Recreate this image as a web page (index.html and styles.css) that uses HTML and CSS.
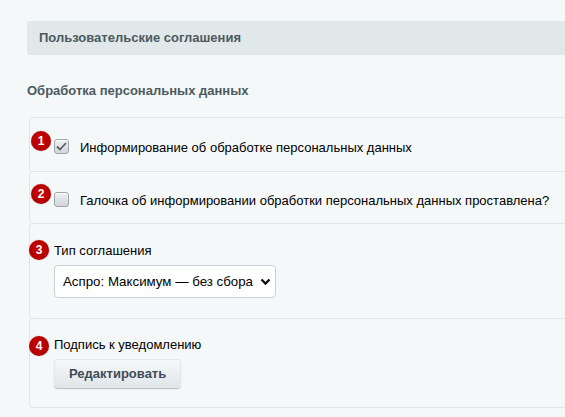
FILE: index.html
```html
<!DOCTYPE html>
<html lang="ru">
  <head>
    <meta charset="UTF-8" />
    <meta name="viewport" content="width=device-width, initial-scale=1.0" />
    <title>Пользовательские соглашения</title>

    <link rel="stylesheet" href="styles.css">
  </head>
  <body>
    <div class="page">
      <div class="section-head">Пользовательские соглашения</div>

      <div class="sub-title">Обработка персональных данных</div>

      <div class="options">
        <div class="row row-check row-1">
          <span class="badge badge-1">1</span>
          <span class="checkbox checked">
            <svg width="11" height="9" viewBox="0 0 11 9"><path d="M1 4.5 L4 7.5 L10 1" fill="none" stroke="#5b6166" stroke-width="1.8"/></svg>
          </span>
          <span class="check-label">Информирование об обработке персональных данных</span>
        </div>

        <div class="row row-check row-2">
          <span class="badge badge-2">2</span>
          <span class="checkbox"></span>
          <span class="check-label">Галочка об информировании обработки персональных данных проставлена?</span>
        </div>

        <div class="row row-field row-3">
          <span class="badge badge-3">3</span>
          <div class="field-label">Тип соглашения</div>
          <div class="select-wrap">
            <select class="select">
              <option>Аспро: Максимум — без сбора (cookie)</option>
            </select>
            <svg class="chevron" width="11" height="8" viewBox="0 0 11 8"><path d="M1.5 1.5 L5.5 5.5 L9.5 1.5" fill="none" stroke="#111" stroke-width="2.4"/></svg>
          </div>
        </div>

        <div class="row row-field row-4">
          <span class="badge badge-4">4</span>
          <div class="field-label">Подпись к уведомлению</div>
          <button type="button" class="btn">Редактировать</button>
        </div>
      </div>
    </div>
  </body>
</html>
```

FILE: styles.css
```css
body {
  margin: 0;
  background-color: #f5f8f9;
  font-family: "Liberation Sans", Arial, sans-serif;
  font-size: 13px;
  color: #000;
}
.page {
  padding: 21px 0 0 27px;
}
.section-head {
  height: 34px;
  line-height: 34px;
  padding-left: 12px;
  background-color: #e0e8ea;
  border-radius: 3px 0 0 3px;
  font-weight: bold;
  color: #4b5a5f;
}
.sub-title {
  margin-top: 28px;
  line-height: 15px;
  font-weight: bold;
  color: #4b5a5f;
}
.options {
  margin: 19px 0 0 2px;
}
.row {
  position: relative;
  border: 1px solid #dde6ea;
  border-right: none;
  border-bottom: none;
  border-radius: 4px 0 0 4px;
  padding-left: 24px;
}
.row:last-child {
  border-bottom: 1px solid #dde6ea;
}
.row-check {
  display: flex;
  align-items: center;
}
.row-1 {
  padding-top: 21px;
  padding-bottom: 17px;
}
.row-2 {
  padding-top: 20px;
  padding-bottom: 16px;
}
.row-3 {
  padding-top: 19px;
  padding-bottom: 20px;
}
.row-4 {
  padding-top: 18px;
  padding-bottom: 19px;
}
.checkbox {
  box-sizing: border-box;
  width: 15px;
  height: 15px;
  border: 1px solid #9ea5aa;
  border-radius: 3px;
  background: linear-gradient(#eef0f1, #d3d7da);
  box-shadow: inset 0 1px 0 #fff;
  display: flex;
  align-items: center;
  justify-content: center;
}
.check-label {
  margin-left: 11px;
  line-height: 15px;
  position: relative;
  top: 1px;
}
.field-label {
  line-height: 16px;
}
.select-wrap {
  position: relative;
  width: 222px;
  margin-top: 6px;
}
.select {
  -webkit-appearance: none;
  appearance: none;
  box-sizing: border-box;
  width: 222px;
  height: 33px;
  padding: 0 20px 0 8px;
  border: 1px solid #c8d1d6;
  border-radius: 4px;
  background-color: #fff;
  font-family: "Liberation Sans", Arial, sans-serif;
  font-size: 13.3px;
  color: #000;
}
.chevron {
  position: absolute;
  right: 5px;
  top: 13px;
  pointer-events: none;
}
.btn {
  display: block;
  margin-top: 6px;
  height: 29px;
  padding: 0 15px;
  border: none;
  border-radius: 4px;
  background: linear-gradient(#f7f9f9, #dfe5e8);
  box-shadow: 0 1px 1px rgba(0, 0, 0, 0.25), inset 0 0 0 1px #e3e8ea;
  font-family: "Liberation Sans", Arial, sans-serif;
  font-size: 13px;
  font-weight: bold;
  color: #3f4c56;
  cursor: pointer;
}
.badge {
  position: absolute;
  width: 20px;
  height: 20px;
  border-radius: 50%;
  background: radial-gradient(circle at 45% 40%, #c80000, #a80000);
  color: #fff;
  font-weight: bold;
  font-size: 12px;
  line-height: 20px;
  text-align: center;
  box-shadow: 0 0 1px rgba(120, 0, 0, 0.6);
}
.badge-1 {
  left: 1px;
  top: 13px;
}
.badge-2 {
  left: 1px;
  top: 12px;
}
.badge-3 {
  left: -1px;
  top: 16px;
}
.badge-4 {
  left: -1px;
  top: 17px;
}
```
